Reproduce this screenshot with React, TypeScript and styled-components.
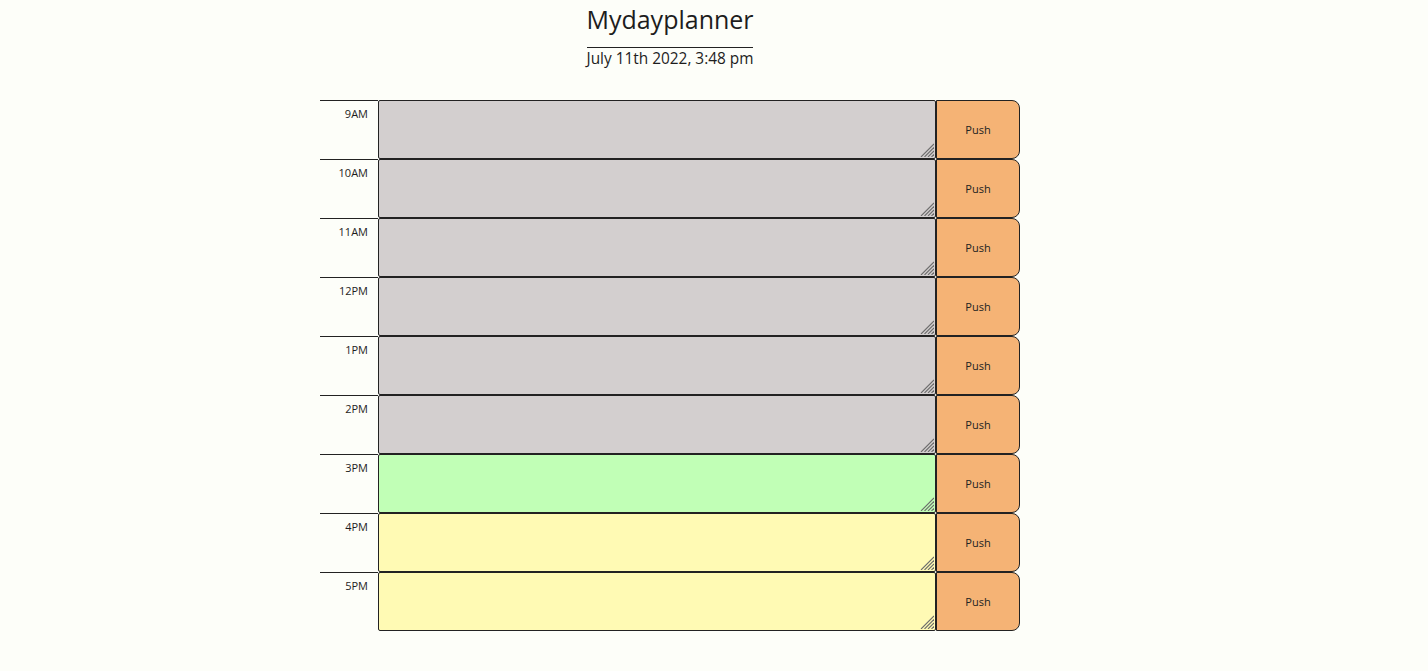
import React from "react";
import styled, { createGlobalStyle } from "styled-components";

const Global = createGlobalStyle`
  html, body { margin: 0; padding: 0; background: #fdfef9; }
  body { font-family: "Open Sans", "Noto Sans", sans-serif; color: #1d1d1d; }
`;

const Page = styled.div`
  width: 700px;
  margin-left: 320px;
  padding-bottom: 40px;
`;

const Header = styled.header`
  display: flex;
  flex-direction: column;
  align-items: center;
  padding-top: 1px;
  margin-bottom: 31px;
`;

const Title = styled.h1`
  margin: 0;
  font-weight: 400;
  font-size: 25px;
  line-height: 36px;
`;

const DateLine = styled.p`
  margin: 10px 0 0;
  border-top: 1px solid #222;
  font-size: 15.4px;
  line-height: 20px;
  padding-top: 1px;
`;

const Row = styled.div`
  display: flex;
  height: 59px;
`;

const Hour = styled.div`
  width: 58px;
  box-sizing: border-box;
  border-top: 1px solid #222;
  text-align: right;
  padding: 5px 10px 0 0;
  font-size: 11px;
  line-height: 15px;
`;

const NoteCell = styled.div`
  position: relative;
  flex: 1;
  display: flex;
`;

const Note = styled.textarea<{ $tone: string }>`
  flex: 1;
  box-sizing: border-box;
  margin: 0;
  height: 59px;
  border: 1px solid #222;
  border-radius: 2px;
  background: ${(p) => p.$tone};
  font-family: inherit;
  font-size: 13px;
  padding: 4px;
  outline: none;
  resize: none;
`;

const Grip = styled.svg`
  position: absolute;
  right: 2px;
  bottom: 2px;
  width: 14px;
  height: 14px;
  pointer-events: none;
`;

const Push = styled.button`
  width: 84px;
  box-sizing: border-box;
  height: 59px;
  margin: 0;
  border: 1px solid #222;
  border-radius: 0 8px 8px 0;
  background: #f5b375;
  font-family: inherit;
  font-size: 11px;
  color: #222;
  padding: 0;
`;

const hours = ["9AM", "10AM", "11AM", "12PM", "1PM", "2PM", "3PM", "4PM", "5PM"];
const tones = ["#d3cfcf", "#d3cfcf", "#d3cfcf", "#d3cfcf", "#d3cfcf", "#d3cfcf", "#c1ffb6", "#fffab4", "#fffab4"];

export default function App() {
  return (
    <>
      <Global />
      <Page>
        <Header>
          <Title>Mydayplanner</Title>
          <DateLine>July 11th 2022, 3:48 pm</DateLine>
        </Header>
        {hours.map((h, i) => (
          <Row key={h}>
            <Hour>{h}</Hour>
            <NoteCell>
              <Note $tone={tones[i]} />
              <Grip viewBox="0 0 14 14">
                <g stroke="#6b6b6b" strokeWidth="1.1">
                  <line x1="14" y1="1" x2="1" y2="14" />
                  <line x1="14" y1="4.5" x2="4.5" y2="14" />
                  <line x1="14" y1="8" x2="8" y2="14" />
                  <line x1="14" y1="11.5" x2="11.5" y2="14" />
                </g>
              </Grip>
            </NoteCell>
            <Push>Push</Push>
          </Row>
        ))}
      </Page>
    </>
  );
}
